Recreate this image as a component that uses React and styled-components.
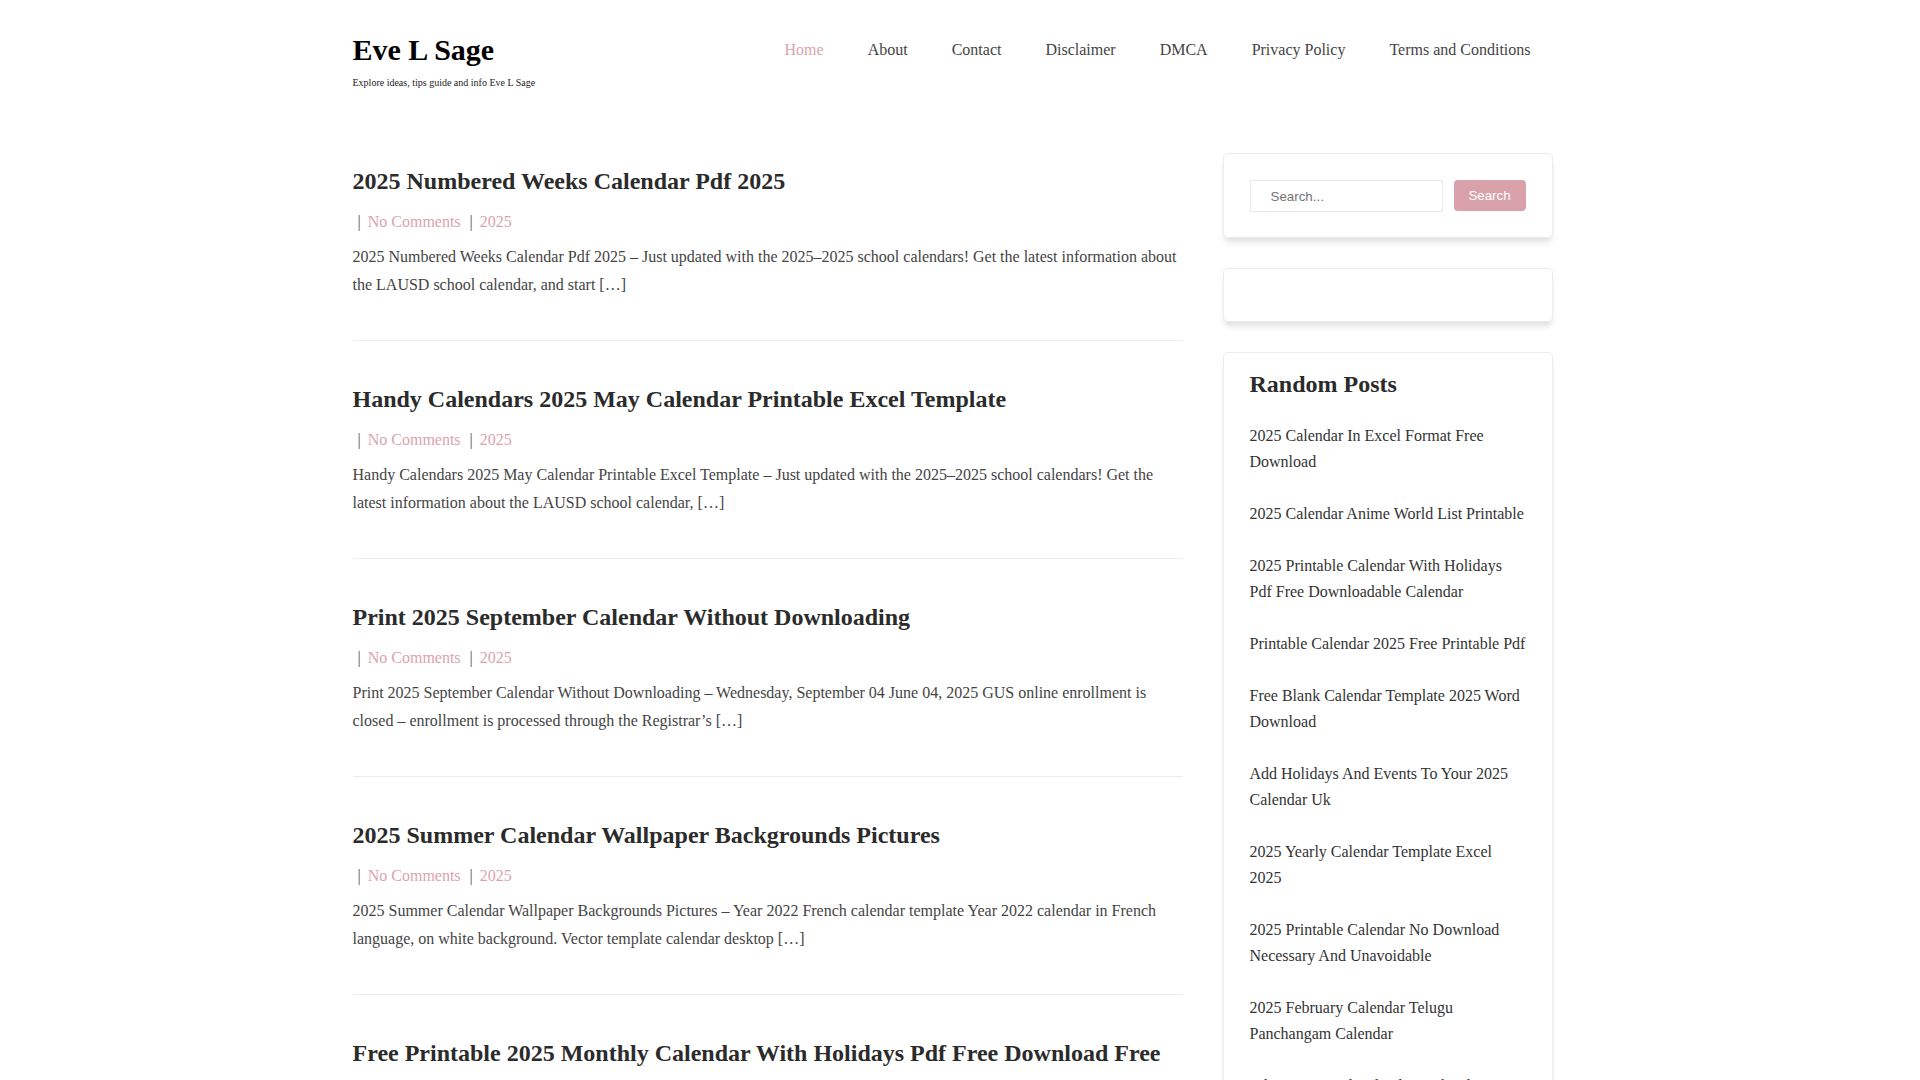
import React from "react"
import styled, { createGlobalStyle } from "styled-components"

const GlobalStyle = createGlobalStyle`
  body {
    margin: 0;
    padding-right: 15px;
    background: #fff;
    font-family: "Liberation Serif", "Times New Roman", serif;
    color: #333;
  }
  a {
    text-decoration: none;
  }
`

const Container = styled.div`
  width: 1200px;
  margin: 0 auto;
`

const Header = styled.header`
  display: flex;
  justify-content: space-between;
  align-items: flex-start;
  padding-top: 32px;
`

const Brand = styled.div`
  display: flex;
  flex-direction: column;
`

const SiteTitle = styled.a`
  font-size: 30px;
  line-height: 36px;
  font-weight: 700;
  color: #000;
`

const Tagline = styled.div`
  margin-top: 7px;
  font-size: 10px;
  line-height: 15px;
  color: #222;
`

const Nav = styled.nav`
  display: flex;
  padding-top: 1px;
`

const NavItem = styled.a`
  padding: 0 22px;
  font-size: 16px;
  line-height: 34px;
  color: ${(p) => (p.$active ? "#dba3ad" : "#444")};
`

const Main = styled.div`
  display: flex;
  align-items: flex-start;
  gap: 40px;
  padding-top: 65px;
  padding-bottom: 60px;
`

const Posts = styled.main`
  flex: 1;
  min-width: 0;
`

const Post = styled.article`
  padding-bottom: 41px;
  margin-bottom: 43px;
  border-bottom: 1px solid #ececf0;
`

const PostTitle = styled.h2`
  margin: 11px 0 11px;
  font-size: 24px;
  line-height: 31px;
  font-weight: 700;
  color: #2b2b2b;
`

const Meta = styled.div`
  font-size: 16px;
  line-height: 28px;
  margin-bottom: 7px;
`

const Sep = styled.span`
  color: #555;
  margin: 0 7px 0 9px;
  &:first-child {
    margin-left: 5px;
  }
`

const MetaLink = styled.a`
  color: #dba3ad;
`

const Excerpt = styled.p`
  margin: 0;
  font-size: 16px;
  line-height: 28px;
  color: #444;
`

const Sidebar = styled.aside`
  width: 330px;
  flex-shrink: 0;
  margin-top: -2px;
  display: flex;
  flex-direction: column;
  gap: 30px;
`

const Card = styled.section`
  background: #fff;
  border: 1px solid #ecebf1;
  border-radius: 5px;
  box-shadow: 0 6px 6px -2px rgba(0, 0, 0, 0.13);
  padding: ${(p) => p.$padding || "26px"};
  min-height: ${(p) => (p.$empty ? "51px" : "0")};
  box-sizing: border-box;
`

const SearchForm = styled.form`
  display: flex;
  align-items: flex-start;
  gap: 11px;
`

const SearchInput = styled.input`
  width: 193px;
  height: 32px;
  box-sizing: border-box;
  border: 1px solid #e8e8ee;
  padding: 0 0 0 20px;
  font-family: "Liberation Sans", Arial, sans-serif;
  font-size: 13.33px;
  color: #333;
  outline: none;
  &::placeholder {
    color: #757575;
  }
`

const SearchButton = styled.button`
  width: 73px;
  height: 31px;
  border: none;
  border-radius: 4px;
  background: #d9a2ab;
  color: #fff;
  font-family: "Liberation Sans", Arial, sans-serif;
  font-size: 13.33px;
  cursor: pointer;
`

const WidgetTitle = styled.h3`
  margin: 0 0 10px;
  font-size: 24px;
  line-height: 31px;
  font-weight: 700;
  color: #2b2b2b;
`

const List = styled.ul`
  list-style: none;
  margin: 0;
  padding: 0;
`

const ListItem = styled.li`
  padding: 13px 0;
  font-size: 16px;
  line-height: 26px;
  a {
    color: #333;
  }
`

const navLinks = [
  "Home",
  "About",
  "Contact",
  "Disclaimer",
  "DMCA",
  "Privacy Policy",
  "Terms and Conditions",
]

const posts = [
  {
    title: "2025 Numbered Weeks Calendar Pdf 2025",
    excerpt:
      "2025 Numbered Weeks Calendar Pdf 2025 – Just updated with the 2025–2025 school calendars! Get the latest information about the LAUSD school calendar, and start […]",
  },
  {
    title: "Handy Calendars 2025 May Calendar Printable Excel Template",
    excerpt:
      "Handy Calendars 2025 May Calendar Printable Excel Template – Just updated with the 2025–2025 school calendars! Get the latest information about the LAUSD school calendar, […]",
  },
  {
    title: "Print 2025 September Calendar Without Downloading",
    excerpt:
      "Print 2025 September Calendar Without Downloading – Wednesday, September 04 June 04, 2025 GUS online enrollment is closed – enrollment is processed through the Registrar’s […]",
  },
  {
    title: "2025 Summer Calendar Wallpaper Backgrounds Pictures",
    excerpt:
      "2025 Summer Calendar Wallpaper Backgrounds Pictures – Year 2022 French calendar template Year 2022 calendar in French language, on white background. Vector template calendar desktop […]",
  },
  {
    title:
      "Free Printable 2025 Monthly Calendar With Holidays Pdf Free Download Free",
    excerpt:
      "Free Printable 2025 Monthly Calendar With Holidays Pdf Free Download Free – Just updated with the 2025–2025 school calendars! Get the latest information about the school calendar, […]",
  },
  {
    title: "2025 Calendar Printable Free Template Word",
    excerpt:
      "2025 Calendar Printable Free Template Word – Just updated with the 2025–2025 school calendars! Get the latest information about the LAUSD school calendar, and start […]",
  },
]

const randomPosts = [
  "2025 Calendar In Excel Format Free Download",
  "2025 Calendar Anime World List Printable",
  "2025 Printable Calendar With Holidays Pdf Free Downloadable Calendar",
  "Printable Calendar 2025 Free Printable Pdf",
  "Free Blank Calendar Template 2025 Word Download",
  "Add Holidays And Events To Your 2025 Calendar Uk",
  "2025 Yearly Calendar Template Excel 2025",
  "2025 Printable Calendar No Download Necessary And Unavoidable",
  "2025 February Calendar Telugu Panchangam Calendar",
  "July 2025 Tamil Calendar Muhurtham Dates",
]

export default function App() {
  return (
    <>
      <GlobalStyle />
      <Container>
        <Header>
          <Brand>
            <SiteTitle href="#">Eve L Sage</SiteTitle>
            <Tagline>Explore ideas, tips guide and info Eve L Sage</Tagline>
          </Brand>
          <Nav>
            {navLinks.map((link, i) => (
              <NavItem key={link} href="#" $active={i === 0}>
                {link}
              </NavItem>
            ))}
          </Nav>
        </Header>

        <Main>
          <Posts>
            {posts.map((post) => (
              <Post key={post.title}>
                <PostTitle>{post.title}</PostTitle>
                <Meta>
                  <Sep>|</Sep>
                  <MetaLink href="#">No Comments</MetaLink>
                  <Sep>|</Sep>
                  <MetaLink href="#">2025</MetaLink>
                </Meta>
                <Excerpt>{post.excerpt}</Excerpt>
              </Post>
            ))}
          </Posts>

          <Sidebar>
            <Card $padding="26px 26px 25px">
              <SearchForm onSubmit={(e) => e.preventDefault()}>
                <SearchInput type="search" placeholder="Search..." />
                <SearchButton type="submit">Search</SearchButton>
              </SearchForm>
            </Card>
            <Card $empty />
            <Card $padding="16px 26px 26px">
              <WidgetTitle>Random Posts</WidgetTitle>
              <List>
                {randomPosts.map((item) => (
                  <ListItem key={item}>
                    <a href="#">{item}</a>
                  </ListItem>
                ))}
              </List>
            </Card>
          </Sidebar>
        </Main>
      </Container>
    </>
  )
}
